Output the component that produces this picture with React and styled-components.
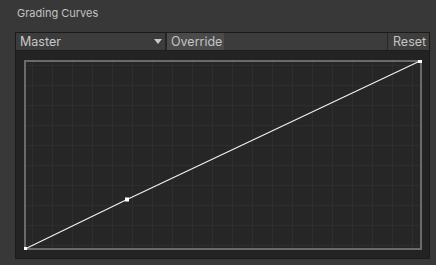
import React from "react";
import styled, { createGlobalStyle } from "styled-components";

const GlobalStyle = createGlobalStyle`
  html, body {
    margin: 0;
    padding: 0;
    background: #383838;
    font-family: Inter, "Noto Sans", sans-serif;
  }
`;

const Page = styled.div`
  width: 436px;
  height: 265px;
  box-sizing: border-box;
  padding: 6px 0 0 15px;
`;

const Title = styled.div`
  font-size: 11px;
  line-height: 14px;
  color: #c2c2c2;
  padding-left: 2px;
  height: 26px;
`;

const Panel = styled.div`
  width: 415px;
  height: 227px;
  box-sizing: border-box;
  border: 1px solid #1b1b1b;
  background: #232323;
  display: flex;
  flex-direction: column;
`;

const Toolbar = styled.div`
  height: 17px;
  display: flex;
  align-items: stretch;
  background: #3c3c3c;
  border-bottom: 1px solid #1e1e1e;
`;

const Dropdown = styled.div`
  width: 150px;
  display: flex;
  align-items: center;
  justify-content: space-between;
  padding: 0 3px 0 4px;
  box-sizing: border-box;
  border-right: 1px solid #262626;
  font-size: 12.5px;
  color: #c8c8c8;
`;

const Caret = styled.span`
  width: 0;
  height: 0;
  border-left: 4px solid transparent;
  border-right: 4px solid transparent;
  border-top: 5px solid #c8c8c8;
`;

const Spacer = styled.div`
  flex: ${(p) => p.$grow || 0};
  width: ${(p) => p.$width || 0}px;
  border-right: 1px solid #262626;
`;

const ToolButton = styled.div`
  display: flex;
  align-items: center;
  box-sizing: border-box;
  width: ${(p) => p.$width}px;
  padding-left: ${(p) => p.$pad}px;
  font-size: 12.5px;
  color: #c4c4c4;
  background: ${(p) => (p.$active ? "#4a4a4a" : "#3e3e3e")};
`;

const Plot = styled.svg`
  display: block;
  margin: 9px 0 0 8px;
`;

const W = 398;
const H = 190;
const points = [
  [1, 189],
  [103, 139.5],
  [396, 1],
];

function Curves() {
  const vx = [];
  for (let x = 8; x < 396; x += 20) vx.push(x + 0.5);
  const hy = [];
  for (let y = 5; y < 188; y += 20) hy.push(y + 0.5);
  return (
    <Plot width={W} height={H} viewBox={`0 0 ${W} ${H}`}>
      <rect x="0" y="0" width={W} height={H} fill="#262626" />
      {vx.map((x) => (
        <line key={"v" + x} x1={x} y1="2" x2={x} y2="188" stroke="#2e2e2e" strokeWidth="1" />
      ))}
      {hy.map((y) => (
        <line key={"h" + y} x1="2" y1={y} x2="396" y2={y} stroke="#2e2e2e" strokeWidth="1" />
      ))}
      <rect x="1" y="1" width="396" height="188" fill="none" stroke="#6a6a6a" strokeWidth="2" />
      <polyline
        points={points.map((p) => p.join(",")).join(" ")}
        fill="none"
        stroke="#f0f0f0"
        strokeWidth="1.2"
      />
      {points.map(([x, y]) => (
        <rect key={x} x={x - 2} y={y - 2} width="4" height="4" fill="#ffffff" />
      ))}
    </Plot>
  );
}

export default function App() {
  return (
    <Page>
      <GlobalStyle />
      <Title>Grading Curves</Title>
      <Panel>
        <Toolbar>
          <Dropdown>
            Master
            <Caret />
          </Dropdown>
          <Spacer $width={4} />
          <ToolButton $width={57} $pad={4} $active>
            Override
          </ToolButton>
          <Spacer $grow={1} />
          <ToolButton $width={41} $pad={5}>
            Reset
          </ToolButton>
        </Toolbar>
        <Curves />
      </Panel>
    </Page>
  );
}
